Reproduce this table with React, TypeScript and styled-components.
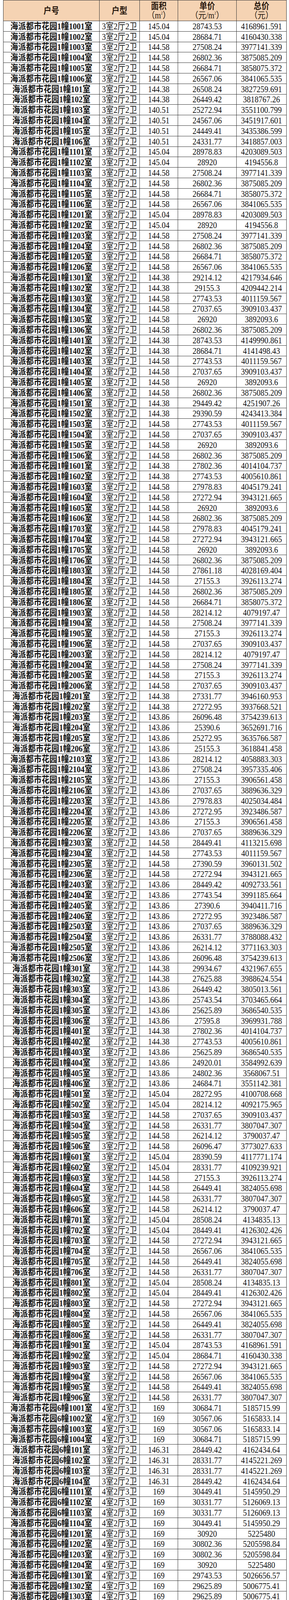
import React from 'react'
import styled, { createGlobalStyle } from 'styled-components'

const GlobalStyle = createGlobalStyle`
  html, body {
    margin: 0;
    padding: 0;
    background: #ffffff;
  }
  body {
    font-family: "Liberation Serif", "Noto Sans CJK SC", serif;
    color: #161616;
  }
`;

// [幢, 室, 户型(3 = 3室2厅2卫, 4 = 4室2厅3卫), 面积, 单价, 总价]
type Row = [number, number, 3 | 4, string, string, string];

const rows: Row[] = [
  [1, 1001, 3, '145.04', '28743.53', '4168961.591'],
  [1, 1002, 3, '145.04', '28684.71', '4160430.338'],
  [1, 1003, 3, '144.58', '27508.24', '3977141.339'],
  [1, 1004, 3, '144.58', '26802.36', '3875085.209'],
  [1, 1005, 3, '144.58', '26684.71', '3858075.372'],
  [1, 1006, 3, '144.58', '26567.06', '3841065.535'],
  [1, 101, 3, '144.38', '26508.24', '3827259.691'],
  [1, 102, 3, '144.38', '26449.42', '3818767.26'],
  [1, 103, 3, '140.51', '25272.94', '3551100.799'],
  [1, 104, 3, '140.51', '24567.06', '3451917.601'],
  [1, 105, 3, '140.51', '24449.41', '3435386.599'],
  [1, 106, 3, '140.51', '24331.77', '3418857.003'],
  [1, 1101, 3, '145.04', '28978.83', '4203089.503'],
  [1, 1102, 3, '145.04', '28920', '4194556.8'],
  [1, 1103, 3, '144.58', '27508.24', '3977141.339'],
  [1, 1104, 3, '144.58', '26802.36', '3875085.209'],
  [1, 1105, 3, '144.58', '26684.71', '3858075.372'],
  [1, 1106, 3, '144.58', '26567.06', '3841065.535'],
  [1, 1201, 3, '145.04', '28978.83', '4203089.503'],
  [1, 1202, 3, '145.04', '28920', '4194556.8'],
  [1, 1203, 3, '144.58', '27508.24', '3977141.339'],
  [1, 1204, 3, '144.58', '26802.36', '3875085.209'],
  [1, 1205, 3, '144.58', '26684.71', '3858075.372'],
  [1, 1206, 3, '144.58', '26567.06', '3841065.535'],
  [1, 1301, 3, '144.38', '29214.12', '4217934.646'],
  [1, 1302, 3, '144.38', '29155.3', '4209442.214'],
  [1, 1303, 3, '144.58', '27743.53', '4011159.567'],
  [1, 1304, 3, '144.58', '27037.65', '3909103.437'],
  [1, 1305, 3, '144.58', '26920', '3892093.6'],
  [1, 1306, 3, '144.58', '26802.36', '3875085.209'],
  [1, 1401, 3, '144.38', '28743.53', '4149990.861'],
  [1, 1402, 3, '144.38', '28684.71', '4141498.43'],
  [1, 1403, 3, '144.58', '27743.53', '4011159.567'],
  [1, 1404, 3, '144.58', '27037.65', '3909103.437'],
  [1, 1405, 3, '144.58', '26920', '3892093.6'],
  [1, 1406, 3, '144.58', '26802.36', '3875085.209'],
  [1, 1501, 3, '144.38', '29449.42', '4251907.26'],
  [1, 1502, 3, '144.38', '29390.59', '4243413.384'],
  [1, 1503, 3, '144.58', '27743.53', '4011159.567'],
  [1, 1504, 3, '144.58', '27037.65', '3909103.437'],
  [1, 1505, 3, '144.58', '26920', '3892093.6'],
  [1, 1506, 3, '144.58', '26802.36', '3875085.209'],
  [1, 1601, 3, '144.38', '27802.36', '4014104.737'],
  [1, 1602, 3, '144.38', '27743.53', '4005610.861'],
  [1, 1603, 3, '144.58', '27978.83', '4045179.241'],
  [1, 1604, 3, '144.58', '27272.94', '3943121.665'],
  [1, 1605, 3, '144.58', '26920', '3892093.6'],
  [1, 1606, 3, '144.58', '26802.36', '3875085.209'],
  [1, 1703, 3, '144.58', '27978.83', '4045179.241'],
  [1, 1704, 3, '144.58', '27272.94', '3943121.665'],
  [1, 1705, 3, '144.58', '26920', '3892093.6'],
  [1, 1706, 3, '144.58', '26802.36', '3875085.209'],
  [1, 1803, 3, '144.58', '27861.18', '4028169.404'],
  [1, 1804, 3, '144.58', '27155.3', '3926113.274'],
  [1, 1805, 3, '144.58', '26802.36', '3875085.209'],
  [1, 1806, 3, '144.58', '26684.71', '3858075.372'],
  [1, 1903, 3, '144.58', '28214.12', '4079197.47'],
  [1, 1904, 3, '144.58', '27508.24', '3977141.339'],
  [1, 1905, 3, '144.58', '27155.3', '3926113.274'],
  [1, 1906, 3, '144.58', '27037.65', '3909103.437'],
  [1, 2003, 3, '144.58', '28214.12', '4079197.47'],
  [1, 2004, 3, '144.58', '27508.24', '3977141.339'],
  [1, 2005, 3, '144.58', '27155.3', '3926113.274'],
  [1, 2006, 3, '144.58', '27037.65', '3909103.437'],
  [1, 201, 3, '144.38', '27331.77', '3946160.953'],
  [1, 202, 3, '144.38', '27272.95', '3937668.521'],
  [1, 203, 3, '143.86', '26096.48', '3754239.613'],
  [1, 204, 3, '143.86', '25390.6', '3652691.716'],
  [1, 205, 3, '143.86', '25272.95', '3635766.587'],
  [1, 206, 3, '143.86', '25155.3', '3618841.458'],
  [1, 2103, 3, '143.86', '28214.12', '4058883.303'],
  [1, 2104, 3, '143.86', '27508.24', '3957335.406'],
  [1, 2105, 3, '143.86', '27155.3', '3906561.458'],
  [1, 2106, 3, '143.86', '27037.65', '3889636.329'],
  [1, 2203, 3, '143.86', '27978.83', '4025034.484'],
  [1, 2204, 3, '143.86', '27272.95', '3923486.587'],
  [1, 2205, 3, '143.86', '27155.3', '3906561.458'],
  [1, 2206, 3, '143.86', '27037.65', '3889636.329'],
  [1, 2303, 3, '144.58', '28449.41', '4113215.698'],
  [1, 2304, 3, '144.58', '27743.53', '4011159.567'],
  [1, 2305, 3, '144.58', '27390.59', '3960131.502'],
  [1, 2306, 3, '144.58', '27272.94', '3943121.665'],
  [1, 2403, 3, '143.86', '28449.42', '4092733.561'],
  [1, 2404, 3, '143.86', '27743.54', '3991185.664'],
  [1, 2405, 3, '143.86', '27390.6', '3940411.716'],
  [1, 2406, 3, '143.86', '27272.95', '3923486.587'],
  [1, 2503, 3, '143.86', '27037.65', '3889636.329'],
  [1, 2504, 3, '143.86', '26331.77', '3788088.432'],
  [1, 2505, 3, '143.86', '26214.12', '3771163.303'],
  [1, 2506, 3, '143.86', '26096.48', '3754239.613'],
  [1, 301, 3, '144.38', '29934.67', '4321967.655'],
  [1, 302, 3, '144.38', '27625.88', '3988624.554'],
  [1, 303, 3, '143.86', '26449.42', '3805013.561'],
  [1, 304, 3, '143.86', '25743.54', '3703465.664'],
  [1, 305, 3, '143.86', '25625.89', '3686540.535'],
  [1, 306, 3, '143.86', '27595.8', '3969931.788'],
  [1, 401, 3, '144.38', '27802.36', '4014104.737'],
  [1, 402, 3, '144.38', '27743.53', '4005610.861'],
  [1, 403, 3, '143.86', '25625.89', '3686540.535'],
  [1, 404, 3, '143.86', '24920.01', '3584992.639'],
  [1, 405, 3, '143.86', '24802.36', '3568067.51'],
  [1, 406, 3, '143.86', '24684.71', '3551142.381'],
  [1, 501, 3, '145.04', '28272.95', '4100708.668'],
  [1, 502, 3, '145.04', '28214.12', '4092175.965'],
  [1, 503, 3, '144.58', '27037.65', '3909103.437'],
  [1, 504, 3, '144.58', '26331.77', '3807047.307'],
  [1, 505, 3, '144.58', '26214.12', '3790037.47'],
  [1, 506, 3, '144.58', '26096.47', '3773027.633'],
  [1, 601, 3, '145.04', '28390.59', '4117771.174'],
  [1, 602, 3, '145.04', '28331.77', '4109239.921'],
  [1, 603, 3, '144.58', '27155.3', '3926113.274'],
  [1, 604, 3, '144.58', '26449.41', '3824055.698'],
  [1, 605, 3, '144.58', '26331.77', '3807047.307'],
  [1, 606, 3, '144.58', '26214.12', '3790037.47'],
  [1, 701, 3, '145.04', '28508.24', '4134835.13'],
  [1, 702, 3, '145.04', '28449.41', '4126302.426'],
  [1, 703, 3, '144.58', '27272.94', '3943121.665'],
  [1, 704, 3, '144.58', '26567.06', '3841065.535'],
  [1, 705, 3, '144.58', '26449.41', '3824055.698'],
  [1, 706, 3, '144.58', '26331.77', '3807047.307'],
  [1, 801, 3, '145.04', '28508.24', '4134835.13'],
  [1, 802, 3, '145.04', '28449.41', '4126302.426'],
  [1, 803, 3, '144.58', '27272.94', '3943121.665'],
  [1, 804, 3, '144.58', '26567.06', '3841065.535'],
  [1, 805, 3, '144.58', '26449.41', '3824055.698'],
  [1, 806, 3, '144.58', '26331.77', '3807047.307'],
  [1, 901, 3, '145.04', '28743.53', '4168961.591'],
  [1, 902, 3, '145.04', '28684.71', '4160430.338'],
  [1, 903, 3, '144.58', '27272.94', '3943121.665'],
  [1, 904, 3, '144.58', '26567.06', '3841065.535'],
  [1, 905, 3, '144.58', '26449.41', '3824055.698'],
  [1, 906, 3, '144.58', '26331.77', '3807047.307'],
  [6, 1001, 4, '169', '30684.71', '5185715.99'],
  [6, 1002, 4, '169', '30567.06', '5165833.14'],
  [6, 1003, 4, '169', '30567.06', '5165833.14'],
  [6, 1004, 4, '169', '30684.71', '5185715.99'],
  [6, 101, 3, '146.31', '28449.42', '4162434.64'],
  [6, 102, 3, '146.31', '28331.77', '4145221.269'],
  [6, 103, 3, '146.31', '28331.77', '4145221.269'],
  [6, 104, 3, '146.31', '28449.42', '4162434.64'],
  [6, 1101, 4, '169', '30449.41', '5145950.29'],
  [6, 1102, 4, '169', '30331.77', '5126069.13'],
  [6, 1103, 4, '169', '30331.77', '5126069.13'],
  [6, 1104, 4, '169', '30449.41', '5145950.29'],
  [6, 1201, 4, '169', '30920', '5225480'],
  [6, 1202, 4, '169', '30802.36', '5205598.84'],
  [6, 1203, 4, '169', '30802.36', '5205598.84'],
  [6, 1204, 4, '169', '30920', '5225480'],
  [6, 1301, 4, '169', '29743.53', '5026656.57'],
  [6, 1302, 4, '169', '29625.89', '5006775.41'],
  [6, 1303, 4, '169', '29625.89', '5006775.41'],
  [6, 1304, 4, '169', '29743.53', '5026656.57'],
  [6, 201, 3, '146.58', '29272.94', '4290827.545'],
  [6, 202, 3, '146.58', '29155.3', '4273583.874'],
  [6, 203, 3, '146.58', '29155.3', '4273583.874'],
  [6, 204, 3, '146.58', '29272.94', '4290827.545'],
  [6, 301, 4, '169', '29625.89', '5006775.41'],
  [6, 302, 4, '169', '29508.24', '4986892.56'],
  [6, 303, 4, '169', '29508.24', '4986892.56'],
  [6, 304, 4, '169', '29625.89', '5006775.41'],
  [6, 401, 4, '169', '28802.36', '4867598.84'],
  [6, 402, 4, '169', '28684.71', '4847715.99'],
  [6, 403, 4, '169', '28684.71', '4847715.99'],
  [6, 404, 4, '169', '28802.36', '4867598.84'],
  [6, 501, 4, '169.51', '30214.12', '5121595.481'],
  [6, 502, 4, '169.51', '30096.47', '5101652.63'],
  [6, 503, 4, '169.51', '30096.47', '5101652.63'],
  [6, 504, 4, '169.51', '30214.12', '5121595.481'],
  [6, 601, 4, '169.51', '30331.77', '5141538.333'],
  [6, 602, 4, '169.51', '30214.12', '5121595.481'],
  [6, 603, 4, '169.51', '30214.12', '5121595.481'],
  [6, 604, 4, '169.51', '30331.77', '5141538.333'],
  [6, 701, 4, '169.51', '30449.41', '5161479.489'],
  [6, 702, 4, '169.51', '30331.77', '5141538.333'],
  [6, 703, 4, '169.51', '30331.77', '5141538.333'],
  [6, 704, 4, '169.51', '30449.41', '5161479.489'],
  [6, 801, 4, '169.51', '30449.41', '5161479.489'],
  [6, 802, 4, '169.51', '30331.77', '5141538.333'],
  [6, 803, 4, '169.51', '30331.77', '5141538.333'],
  [6, 804, 4, '169.51', '30449.41', '5161479.489'],
  [6, 901, 4, '169.51', '30684.71', '5201365.192'],
  [6, 902, 4, '169.51', '30567.06', '5181422.341'],
  [6, 903, 4, '169.51', '30567.06', '5181422.341'],
  [6, 904, 4, '169.51', '30684.71', '5201365.192'],
];

const layouts = { 3: '3室2厅2卫', 4: '4室2厅3卫' };

export default function App() {
  return (
    <>
      <GlobalStyle />
      <Wrapper>
        <Grid role="table">
          <Row role="row">
            <HeadCell><Tall>户号</Tall></HeadCell>
            <HeadCell><Tall>户型</Tall></HeadCell>
            <HeadCell>
              <Tall>面积</Tall>
              <Line>（m<sup>2</sup>）</Line>
            </HeadCell>
            <HeadCell>
              <Tall>单价</Tall>
              <Line>（元/m<sup>2</sup>）</Line>
            </HeadCell>
            <HeadCell>
              <Tall>总价</Tall>
              <Line>（元）</Line>
            </HeadCell>
          </Row>
          {rows.map(([b, room, t, area, unit, total], i) => (
            <Row role="row" key={i}>
              <Cell $bold><Tall>海派都市花园{b}幢{room}室</Tall></Cell>
              <Cell><Tall>{layouts[t]}</Tall></Cell>
              <Cell><Tall>{area}</Tall></Cell>
              <Cell><Tall>{unit}</Tall></Cell>
              <Cell><Tall>{total}</Tall></Cell>
            </Row>
          ))}
        </Grid>
        <Watermark>搜狐号@搜狐焦点杭州站</Watermark>
      </Wrapper>
    </>
  )
}

const Wrapper = styled.div`
  position: relative;
  width: 726px;
  margin-left: 8px;
`;

const Grid = styled.div`
  display: grid;
  grid-template-columns: 245px 102px 97px 149px 127px;
  grid-template-rows: 52px;
  grid-auto-rows: 25.8px;
  gap: 1px;
  padding: 1px;
  background: #343434;
`;

const Row = styled.div`
  display: contents;
`;

const HeadCell = styled.div`
  display: flex;
  flex-direction: column;
  align-items: center;
  justify-content: center;
  background: #f5d3b3;
  font-size: 20px;
  font-weight: 700;
  line-height: 22px;
  color: #2a1a10;

  sup {
    font-size: 9px;
    line-height: 0;
    vertical-align: 9px;
  }
`;

const Line = styled.div`
  font-weight: 400;
  transform: scaleY(1.12);
  margin-top: 2px;
`;

const Cell = styled.div<{ $bold?: boolean }>`
  display: flex;
  align-items: center;
  justify-content: center;
  overflow: hidden;
  white-space: nowrap;
  background: #ffffff;
  font-size: 20px;
  line-height: 22px;
  font-weight: ${props => props.$bold ? 700 : 400};
  color: #141414;
`;

// the source picture is stretched a little in height
const Tall = styled.span`
  display: block;
  transform: scaleY(1.15);
`;

const Watermark = styled.div`
  position: absolute;
  right: 6px;
  bottom: 3px;
  font-family: "Noto Sans CJK SC", sans-serif;
  font-size: 16px;
  font-weight: 700;
  line-height: 20px;
  color: #ffffff;
  text-shadow: 0 0 2px #333, 1px 1px 1px #333, -1px -1px 1px #333;
  letter-spacing: -0.5px;
`;
